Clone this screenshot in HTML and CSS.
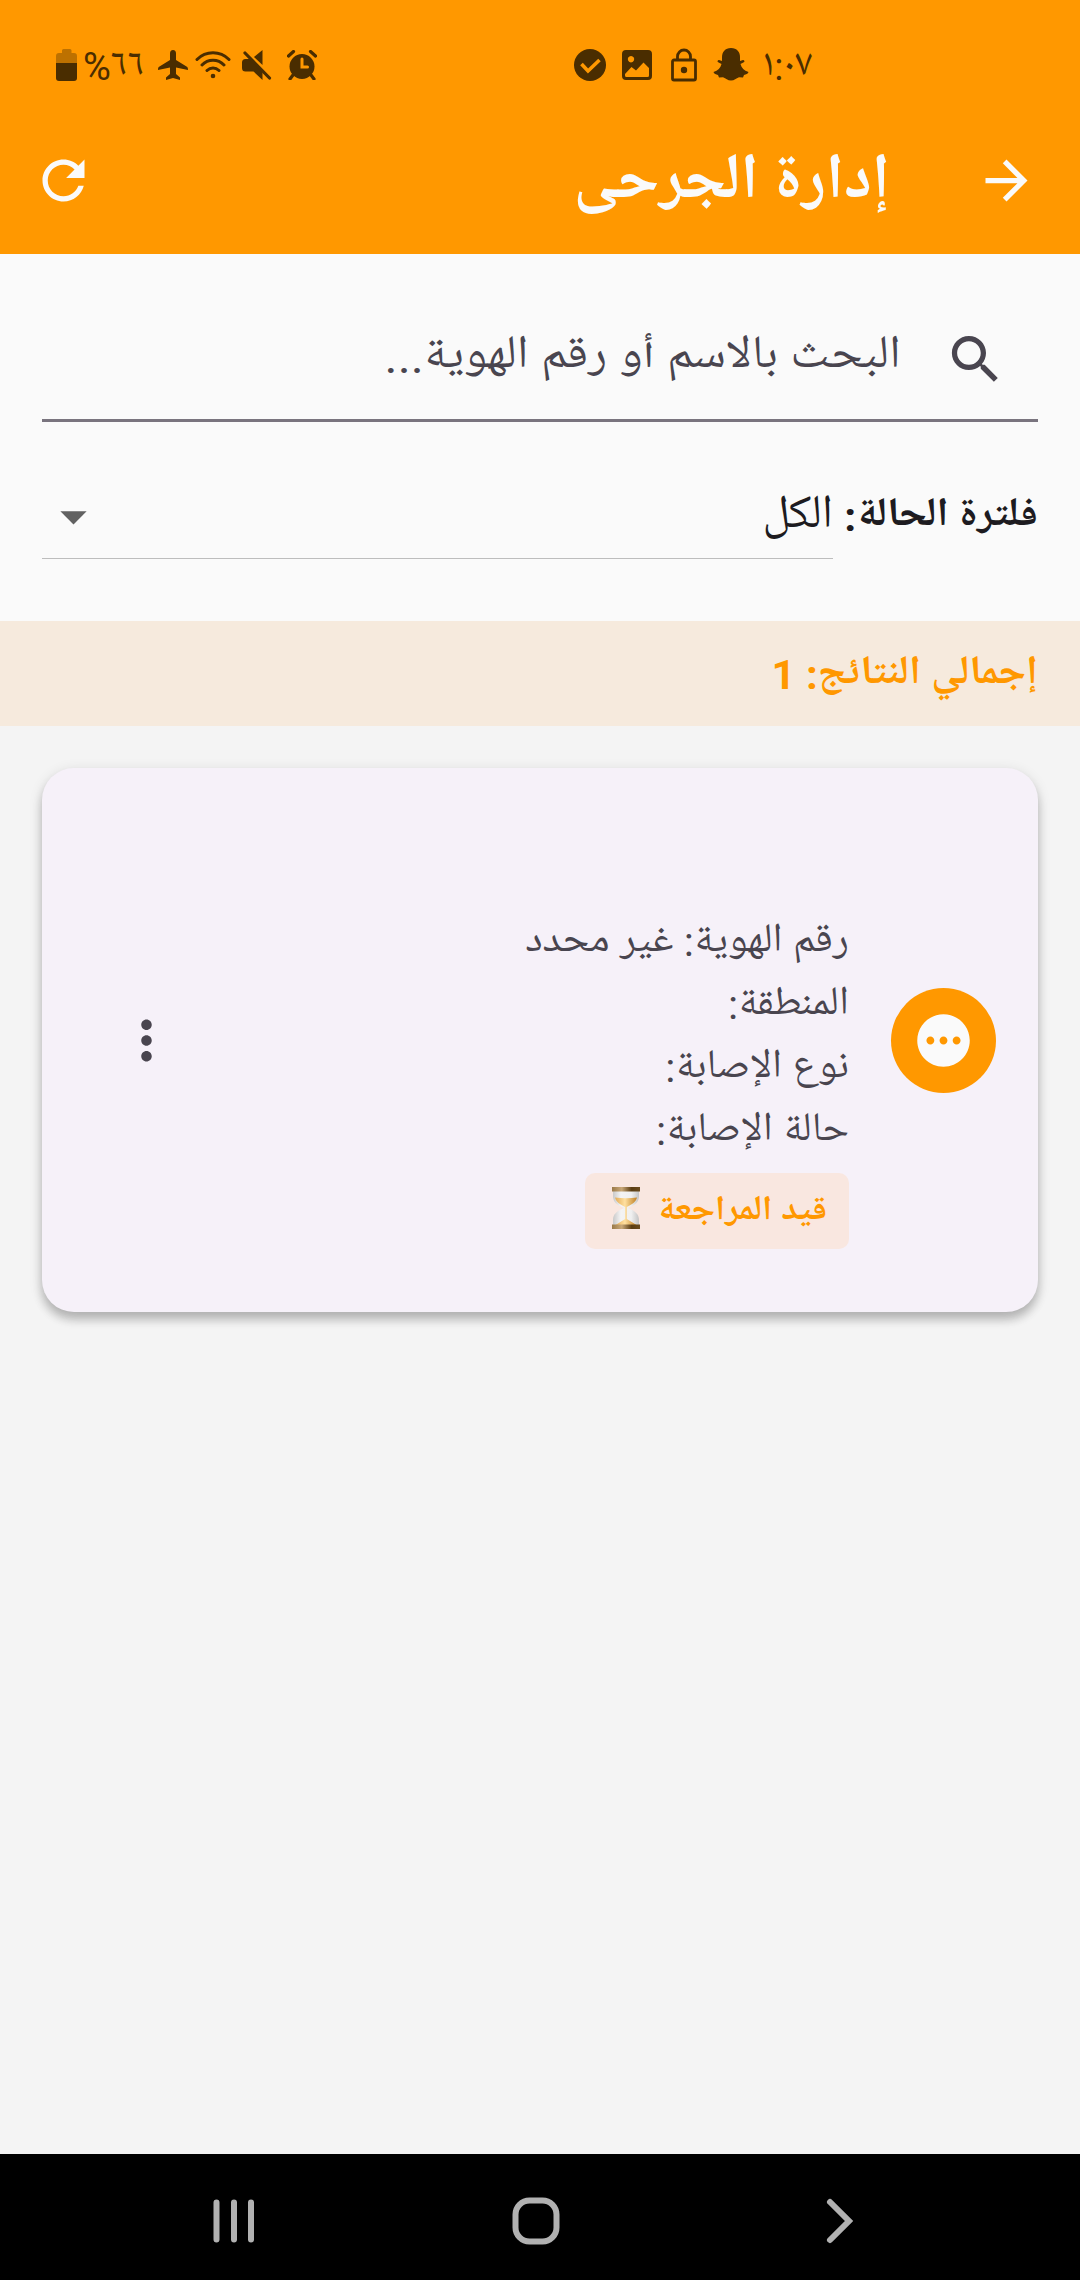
FILE: index.html
```html
<!DOCTYPE html>
<html lang="ar" dir="rtl">
<head>
<meta charset="utf-8">
<title>إدارة الجرحى</title>
<link rel="stylesheet" href="styles.css">
</head>
<body>
<div class="screen">
  <header class="header">
    <div class="status">
      <div class="status-start">
        <span class="clock">١:٠٧</span>
        <svg class="i-snap" width="36" height="36" viewBox="0 0 36 36"><path d="M18 1c6 0 9 4 9 9v4l3-1c1.500 0 2 1.600.8 2.300L27.500 17c1 4 3.500 6.500 8 8-.5 2-2.500 2.500-4.500 3l-1 2.500-4-.3c-3 1-4.500 3.300-8 3.300s-5-2.300-8-3.300l-4 .3L5 28c-2-.5-4-1-4.500-3 4.500-1.500 7-4 8-8l-3.300-1.700C4 14.600 4.500 13 6 13l3 1v-4c0-5 3-9 9-9z"/></svg>
        <svg class="i-lock" width="26" height="34" viewBox="0 0 26 34"><path d="M6.500 12V8.500a6.500 6.500 0 0 1 13 0V12M3 12h20a1.500 1.500 0 0 1 1.500 1.500v17A1.500 1.500 0 0 1 23 32H3a1.500 1.500 0 0 1-1.500-1.500v-17A1.500 1.500 0 0 1 3 12z" fill="none" stroke="#4a2d00" stroke-width="2.800"/><circle cx="13" cy="22" r="3.200"/></svg>
        <svg class="i-pic" width="30" height="30" viewBox="0 0 30 30"><path fill-rule="evenodd" d="M4 0h22a4 4 0 0 1 4 4v22a4 4 0 0 1-4 4H4a4 4 0 0 1-4-4V4a4 4 0 0 1 4-4zM9 6a3.200 3.200 0 1 0 .01 0zM3 24v1.500A1.500 1.500 0 0 0 4.500 27h21a1.500 1.500 0 0 0 1.500-1.500V18l-5.500-5.500-7.500 8L9.500 17z"/></svg>
        <svg class="i-check" width="32" height="32" viewBox="0 0 32 32"><circle cx="16" cy="16" r="16"/><path d="M7.500 15l6.500 7L25.500 11" fill="none" stroke="#ff9800" stroke-width="3.600"/></svg>
      </div>
      <div class="status-end">
        <svg class="i-alarm" width="30" height="30" viewBox="0 0 30 30"><circle cx="15" cy="16.500" r="12.500"/><path d="M1.500 6l5-4.500M28.500 6l-5-4.500M6 25l-3 4M24 25l3 4" stroke="#4a2d00" stroke-width="3.200" stroke-linecap="round"/><path d="M15 9v8h5.500" fill="none" stroke="#ff9800" stroke-width="3" stroke-linecap="round"/></svg>
        <svg class="i-mute" width="30" height="30" viewBox="0 0 30 30"><path d="M20.500 0v15L12 7zM3.500 9H8l12.500 12.500V30l-9-8.500h-8A3.500 3.500 0 0 1 0 18v-5.500A3.500 3.500 0 0 1 3.500 9z"/><path d="M3 3l24.500 25" stroke="#4a2d00" stroke-width="3.200" stroke-linecap="round"/></svg>
        <svg class="i-wifi" width="36" height="28" viewBox="0 0 36 28"><path d="M2 8.500C11-.5 25-.5 34 8.500M7 14c6-6.500 16-6.500 22 0M12 19.500c3.500-3.500 8.500-3.500 12 0" fill="none" stroke="#4a2d00" stroke-width="3" stroke-linecap="round"/><circle cx="18" cy="25" r="2.300"/></svg>
        <svg class="i-plane" width="32" height="32" viewBox="0 0 32 32"><path d="M16 1c2 0 3 1.500 3 3.500V11l10.500 6.500c1.200.8 1.500 1.500 1.500 3.500l-12-2.500V25l4 3.500V31l-7-2-7 2v-2.500l4-3.500v-6.500L1 21c0-2 .3-2.700 1.500-3.500L13 11V4.500C13 2.500 14 1 16 1z"/></svg>
        <span class="percent" dir="ltr">%٦٦</span>
        <svg class="i-battery" width="22" height="34" viewBox="0 0 22 34"><path d="M0 15V8a3 3 0 0 1 3-3h3V2.500A1.500 1.500 0 0 1 7.500 1h6.500A1.500 1.500 0 0 1 15.500 2.500V5H18a3 3 0 0 1 3 3v7z" fill="#bd7100"/><path d="M0 15h21v15a3 3 0 0 1-3 3H3a3 3 0 0 1-3-3z"/></svg>
      </div>
    </div>
    <div class="appbar">
      <svg width="63" height="63" viewBox="0 0 24 24"><path d="M12 4l-1.410 1.410L16.170 11H4v2h12.170l-5.580 5.590L12 20l8-8z"/></svg>
      <h1 class="title">إدارة الجرحى</h1>
      <svg width="63" height="63" viewBox="0 0 24 24"><path d="M17.650 6.350C16.200 4.900 14.210 4 12 4c-4.420 0-7.990 3.580-7.990 8s3.570 8 7.990 8c3.730 0 6.840-2.550 7.730-6h-2.080c-.82 2.330-3.040 4-5.650 4-3.310 0-6-2.690-6-6s2.690-6 6-6c1.660 0 3.140.69 4.220 1.780L13 11h7V4l-2.350 2.350z"/></svg>
    </div>
  </header>
  <section class="filters">
    <div class="search">
      <svg width="63" height="63" viewBox="0 0 24 24"><path d="M15.500 14h-.79l-.28-.27C15.410 12.590 16 11.110 16 9.500 16 5.910 13.090 3 9.500 3S3 5.910 3 9.500 5.910 16 9.500 16c1.610 0 3.090-.59 4.230-1.570l.27.28v.79l5 4.990L20.490 19l-4.990-5zm-6 0C7.010 14 5 11.990 5 9.500S7.010 5 9.500 5 14 7.010 14 9.500 11.990 14 9.500 14z"/></svg>
      <span class="hint wide-lg">البحث بالاسم أو رقم الهوية...</span>
    </div>
    <div class="filter-row">
      <span class="label wide-md">فلترة الحالة:</span>
      <div class="select">
        <span class="value">الكل</span>
        <svg class="caret" width="63" height="63" viewBox="0 0 24 24"><path d="M7 10l5 5 5-5z"/></svg>
      </div>
    </div>
  </section>
  <div class="total"><span class="wide">إجمالي النتائج: 1</span></div>
  <main class="list">
    <article class="card">
      <div class="avatar"><svg width="63" height="63" viewBox="0 0 24 24"><path d="M12 2C6.480 2 2 6.480 2 12s4.480 10 10 10 10-4.480 10-10S17.520 2 12 2zM7 13.500c-.83 0-1.500-.67-1.500-1.500s.67-1.500 1.500-1.500 1.500.67 1.500 1.500-.67 1.500-1.500 1.500zm5 0c-.83 0-1.500-.67-1.500-1.500s.67-1.500 1.500-1.500 1.500.67 1.500 1.500-.67 1.500-1.500 1.500zm5 0c-.83 0-1.500-.67-1.500-1.500s.67-1.500 1.500-1.500 1.500.67 1.500 1.500-.67 1.500-1.500 1.500z"/></svg></div>
      <div class="details">
        <p class="line wide">رقم الهوية: غير محدد</p>
        <p class="line wide">المنطقة:</p>
        <p class="line wide">نوع الإصابة:</p>
        <p class="line wide">حالة الإصابة:</p>
        <div class="chip">
          <span class="chip-text wide">قيد المراجعة</span>
          <svg class="hourglass" width="28" height="42" viewBox="0 0 28 42">
            <defs>
              <linearGradient id="wood"><stop offset="0" stop-color="#9a7a48"/><stop offset=".35" stop-color="#c9a878"/><stop offset=".7" stop-color="#5a3d12"/><stop offset="1" stop-color="#6b4c1e"/></linearGradient>
              <linearGradient id="glass"><stop offset="0" stop-color="#c9c9c9"/><stop offset=".3" stop-color="#f4f4f4"/><stop offset=".7" stop-color="#f0f0f0"/><stop offset="1" stop-color="#c4c4c4"/></linearGradient>
              <linearGradient id="sand"><stop offset="0" stop-color="#e3ab56"/><stop offset=".45" stop-color="#ffe0a0"/><stop offset="1" stop-color="#c07f22"/></linearGradient>
            </defs>
            <path d="M1 4h26v5c0 6-4 9-11 12 7 3 11 6 11 12v5H1v-5c0-6 4-9 11-12C5 18 1 15 1 9z" fill="url(#glass)"/>
            <path d="M3 10.500q11 1.500 22 0c-1 4.500-5 7-10.200 9.500V32l9.700 6h-21l9.700-6V20C8 17.500 4 15 3 10.500z" fill="url(#sand)"/>
            <path d="M0 0h28v4.500H0zM0 37.500h28V42H0z" fill="url(#wood)"/>
          </svg>
        </div>
      </div>
      <svg class="more" width="63" height="63" viewBox="0 0 24 24"><path d="M12 8c1.100 0 2-.9 2-2s-.9-2-2-2-2 .9-2 2 .9 2 2 2zm0 2c-1.100 0-2 .9-2 2s.9 2 2 2 2-.9 2-2-.9-2-2-2zm0 6c-1.100 0-2 .9-2 2s.9 2 2 2 2-.9 2-2-.9-2-2-2z"/></svg>
    </article>
  </main>
  <nav class="nav">
    <svg class="back" width="30" height="50" viewBox="0 0 30 50"><path d="M5 6l19 19L5 44"/></svg>
    <svg class="home" width="50" height="50" viewBox="0 0 50 50"><rect x="4.500" y="4.500" width="41" height="41" rx="14"/></svg>
    <svg class="recent" width="44" height="50" viewBox="0 0 44 50"><path d="M4.500 6.500v37M22 6.500v37M39 6.500v37"/></svg>
  </nav>
</div>
</body>
</html>
```
FILE: styles.css
```css
* { box-sizing: border-box; }
body { margin: 0; background: #f4f4f4; font-family: Roboto, "Noto Naskh Arabic UI", "Noto Naskh Arabic", "Noto Sans Arabic", "DejaVu Sans", sans-serif; }
.screen { width: 1080px; height: 2280px; display: flex; flex-direction: column; background: #f4f4f4; overflow: hidden; }
svg { display: block; flex: none; }
h1, p { margin: 0; }
span, h1, p { white-space: nowrap; }

.wide, .wide-md, .wide-lg { display: block; transform-origin: 100% 50%; }
.wide { transform: scaleX(1.040); }
.wide-md { transform: scaleX(1.054); }
.wide-lg { transform: scaleX(1.076); }

.header { height: 254px; background: #ff9800; color: #fafafa; }
.status { height: 107px; padding: 22px 268px 0 56px; display: flex; justify-content: space-between; color: #4a2d00; fill: #4a2d00; }
.status-start, .status-end { height: 86px; display: flex; align-items: center; }
.clock { width: 47px; font-size: 38px; }
.percent { width: 60px; font-size: 38px; }
.i-snap { margin-right: 16px; }
.i-lock { margin-right: 16px; }
.i-pic { margin-right: 19px; }
.i-check { margin-right: 16px; }
.i-mute { margin-right: 15px; }
.i-wifi { margin-right: 11px; }
.i-plane { margin-right: 6px; }
.percent { margin-right: 14px; }
.i-battery { margin-right: 5px; }

.appbar { height: 147px; padding: 0 42px 0 31.5px; display: flex; align-items: center; fill: #fafafa; }
.title { flex: 1; margin-right: 85px; padding-top: 9px; font-size: 64px; font-weight: 700; line-height: 80px; }

.filters { height: 367.300px; padding: 42px; background: #fafafa; }
.search { height: 126px; padding: 0 31px; display: flex; align-items: center; border-bottom: 3px solid #79747e; fill: #49454f; color: #49454f; }
.search svg { margin-top: 3px; }
.hint { margin-right: 43px; margin-bottom: 4px; font-size: 46.200px; }
.filter-row { height: 137px; display: flex; align-items: flex-end; color: #1d1b20; }
.label { width: 205px; height: 83px; line-height: 84px; font-size: 40.400px; font-weight: 700; }
.select { flex: 1; height: 83px; display: flex; justify-content: space-between; border-bottom: 1px solid #bdbdbd; fill: #616161; line-height: 82px; font-size: 47px; }
.caret { margin-top: 9px; }

.total { height: 105px; padding: 0 42px; background: #f6eadd; color: #ff9800; font-size: 40.400px; font-weight: 700; line-height: 109px; }

.list { flex: 1; padding: 42px; }
.card { height: 543.500px; padding: 0 42px; border-radius: 32px; background: #f6f1f9; display: flex; align-items: center; box-shadow: 0 8px 10px rgba(0,0,0,.2), 0 3px 14px rgba(0,0,0,.12); }
.avatar { width: 105px; height: 105px; border-radius: 50%; background: #ff9800; fill: #fafafa; display: flex; align-items: center; justify-content: center; }
.details { flex: 1; margin-right: 42px; padding-top: 79px; color: #49454f; }
.line { height: 63px; line-height: 64px; font-size: 40.400px; }
.chip { width: 264px; height: 76px; margin-top: 10px; padding: 0 22px; border-radius: 10px; background: #f9e7e0; color: #ff9800; display: flex; align-items: center; gap: 20px; }
.chip-text { width: 167px; font-size: 34.600px; font-weight: 700; }
.hourglass { margin-bottom: 5px; }
.more { margin-left: 31px; fill: #49454f; }

.nav { height: 126px; padding: 7px 225px 0 0; background: #000; display: flex; align-items: center; fill: none; stroke: #b1b1b1; stroke-width: 6; stroke-linecap: round; }
.home { margin-right: 264px; }
.recent { margin-right: 255px; }
```
